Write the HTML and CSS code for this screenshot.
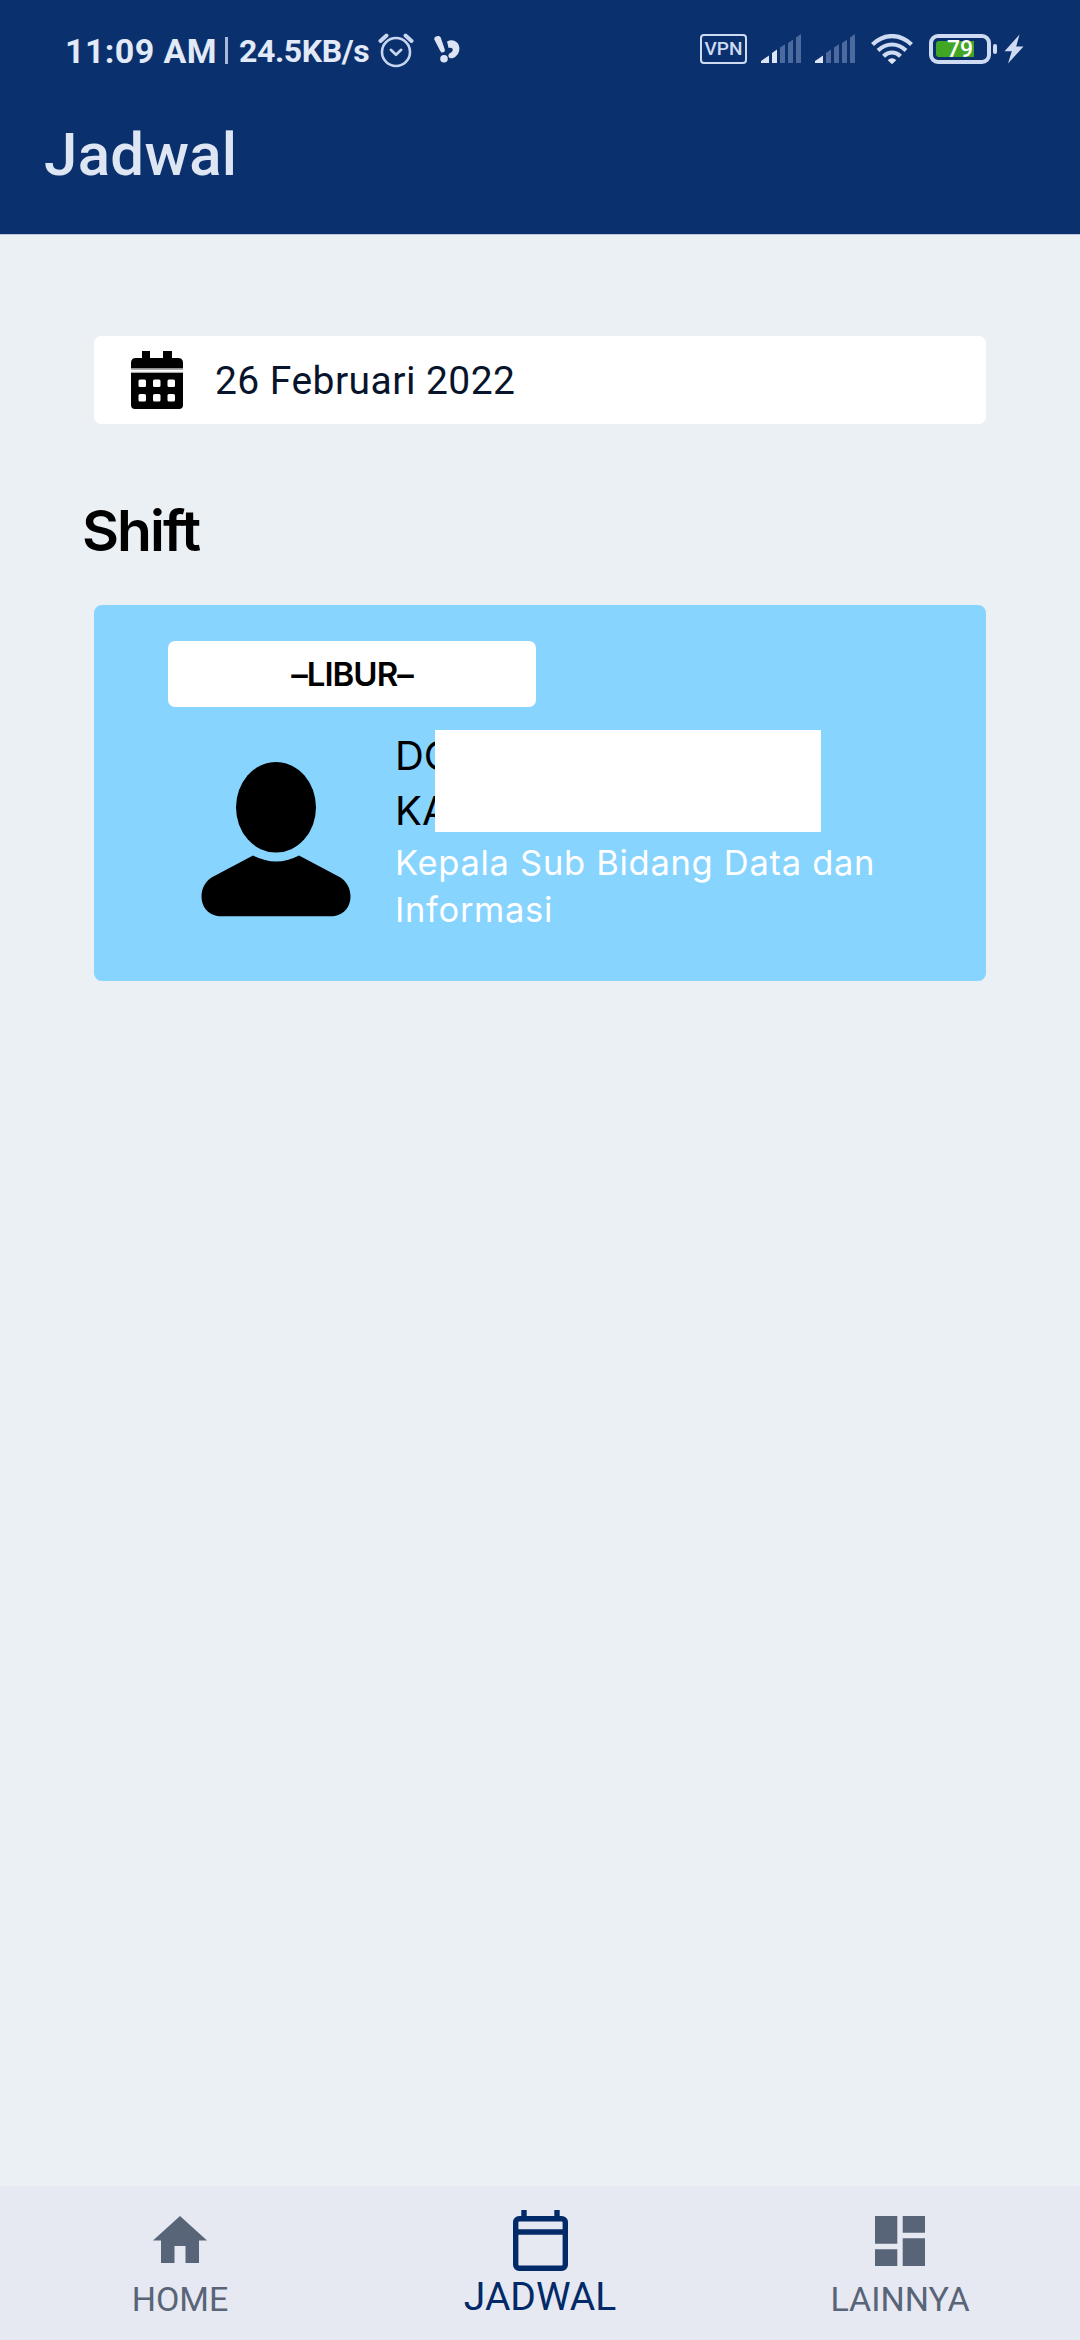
FILE: index.html
```html
<!DOCTYPE html>
<html lang="id">
<head>
<meta charset="utf-8">
<title>Jadwal</title>
<link rel="stylesheet" href="styles.css">
</head>
<body>
<div class="screen">
  <header class="header">
    <div class="status">
      <div class="status-left">
        <span class="time">11:09 AM</span>
        <span class="divider"></span>
        <span class="speed">24.5KB/s</span>
        <svg class="alarm" width="36" height="36" viewBox="0 0 36 36" fill="none" stroke="#c9d6f0" stroke-width="2.6" stroke-linecap="round" stroke-linejoin="round">
          <circle cx="18" cy="20" r="14"/>
          <path d="M12.8 17.8 18 22.8l5.200-5"/>
          <path d="M2.500 9 8.500 3.500M33.500 9l-6-5.500" stroke-width="4"/>
        </svg>
        <svg class="app" width="28" height="28" viewBox="0 0 28 28" fill="#dde5f5">
          <path d="M1.200 4.200C1 1.200 6.800-.3 7.800 2.800l4 11.800c.6 2.600-3 4-4.400 1.600z"/>
          <circle cx="11" cy="23.700" r="3.800"/>
          <path d="M14 6.500c6-3.500 12.800.5 12.400 7.500-.4 6-5 9.500-8.800 9.300-2.400-.3-3-3.700-.8-5 2.600-1.300 3.600-3.300 2.600-4.800-1-1.200-2.600-.9-3.800-.5z"/>
        </svg>
      </div>
      <div class="status-right">
        <span class="vpn">VPN</span>
        <svg class="sig1" width="40" height="30" viewBox="0 0 40 30" fill="#dde5f5">
          <path d="M0 29v-2l8-5.500V29zM11 29V19l5-3.500V29z"/>
          <path fill="#4c6a9d" d="M19 29V13.500l5-3.300V29zM27 29V9l5-3.300V29zM35 29V3.500L40 0v29z"/>
        </svg>
        <svg class="sig2" width="40" height="30" viewBox="0 0 40 30" fill="#dde5f5">
          <path d="M0 29v-2l8-5.500V29z"/>
          <path fill="#4c6a9d" d="M11 29V19l5-3.500V29zM19 29V13.500l5-3.300V29zM27 29V9l5-3.300V29zM35 29V3.500L40 0v29z"/>
        </svg>
        <svg class="wifi" width="42" height="30" viewBox="0 0 42 30" fill="none" stroke="#cfdbf3" stroke-width="4.200">
          <path d="M1.500 10.500C13-.8 29-.8 40.500 10.500"/>
          <path d="M7 16.500c8.500-8 19.500-8 28 0"/>
          <path d="M12.500 22.200c5.300-4.800 11.700-4.800 17 0"/>
          <path d="M16.800 26.300c2-2.700 6.400-2.700 8.400 0L21 30.200z" fill="#dde5f5" stroke="none"/>
        </svg>
        <span class="battery"><span class="level"></span><span class="percent">79</span></span>
        <span class="nub"></span>
        <svg class="bolt" width="20" height="30" viewBox="0 0 20 30" fill="#cfdbf3"><path d="M15.500.5.500 17.200h7.300L4 29.500 19.500 12.500h-7.300z"/></svg>
      </div>
    </div>
    <h1 class="title">Jadwal</h1>
  </header>

  <main class="content">
    <div class="date">
      <svg class="date-icon" width="52" height="58" viewBox="0 0 52 58">
        <path fill="#000" d="M11 0h8v7h13V0h9v7h6q5 0 5 5v5.500H0V12q0-5 5-5h6zM0 22h52v32q0 4-4 4H4q-4 0-4-4z"/>
        <path fill="#aaa" d="M0 17.500h52v1.500H0zM0 20.800h52V22H0z"/>
        <g fill="#fff">
          <rect x="7.500" y="28.500" width="7.500" height="7.500" rx="1.500"/><rect x="22" y="28.500" width="7.500" height="7.500" rx="1.500"/><rect x="36.500" y="28.500" width="7.500" height="7.500" rx="1.500"/>
          <rect x="7.500" y="43" width="7.500" height="7.500" rx="1.500"/><rect x="22" y="43" width="7.500" height="7.500" rx="1.500"/><rect x="36.500" y="43" width="7.500" height="7.500" rx="1.500"/>
        </g>
      </svg>
      <span class="date-text">26 Februari 2022</span>
    </div>

    <h2 class="section">Shift</h2>

    <section class="card">
      <div class="chip">–LIBUR–</div>
      <div class="person">
        <svg class="avatar" width="150" height="155" viewBox="0 0 150 155">
          <ellipse cx="75" cy="45.300" rx="40" ry="45.300"/>
          <path d="M52 93.500q23 12 46 0l41.500 22c15 9.500 13.500 36-7 38.700h-115c-20.500-2.700-22-29.200-7-38.700z"/>
        </svg>
        <div class="info">
          <div class="name">DO<br>KA<span class="mask"></span></div>
          <div class="role">Kepala Sub Bidang Data dan<br>Informasi</div>
        </div>
      </div>
    </section>
  </main>

  <nav class="nav">
    <a class="tab">
      <svg width="54" height="47" viewBox="0 0 54 47" fill="#586477"><path d="M27 0 54 24.500h-8V47H32.500V30h-11v17H8V24.500H0z"/></svg>
      <span class="label home">HOME</span>
    </a>
    <a class="tab active">
      <svg width="55" height="61" viewBox="0 0 55 61" fill="none" stroke="#022a68" stroke-width="5.400"><rect x="2.700" y="8.700" width="49.600" height="49.600" rx="3.500"/><path d="M3 22h49M11 0v8M44 0v8"/></svg>
      <span class="label schedule">JADWAL</span>
    </a>
    <a class="tab">
      <svg width="50" height="50" viewBox="0 0 50 50" fill="#586477"><path d="M0 0h22.300v27.800H0zM27.700 0H50v16.700H27.700zM0 33.300h22.300V50H0zM27.700 22.200H50V50H27.700z"/></svg>
      <span class="label more">LAINNYA</span>
    </a>
  </nav>
</div>
</body>
</html>
```
FILE: styles.css
```css
* { box-sizing: border-box; }

body {
  margin: 0;
  font-family: Roboto, "Liberation Sans", sans-serif;
}

svg { display: block; flex: none; }

.screen {
  display: flex;
  flex-direction: column;
  width: 1080px;
  height: 2340px;
  overflow: hidden;
  background: #ebf0f5;
}

.header {
  height: 235px;
  background: #0a316e;
  border-bottom: 1px solid #b9c6de;
}

.status {
  display: flex;
  justify-content: space-between;
  align-items: center;
  height: 98px;
  padding: 0 56px 0 65px;
}

.status-left, .status-right { display: flex; align-items: center; }

.time, .speed {
  padding-top: 3px;
  font-weight: 700;
  color: #e2e9f7;
  white-space: nowrap;
}
.time { width: 149px; font-size: 34px; letter-spacing: 0.4px; }
.divider { width: 3px; height: 27px; margin: 2px 11px 0; background: #a9b9d9; }
.speed { width: 131px; font-size: 32px; letter-spacing: -0.4px; }
.alarm { margin: 2px 0 0 8px; }
.app { margin-left: 19px; }

.vpn {
  width: 47px;
  height: 30px;
  border: 2.500px solid #cfdbf3;
  border-radius: 4px;
  font-size: 19px;
  font-weight: 500;
  line-height: 26px;
  text-align: center;
  color: #cfdbf3;
}
.sig1 { margin-left: 14px; }
.sig2 { margin-left: 14px; }
.wifi { margin-left: 16px; }

.battery {
  position: relative;
  width: 62px;
  height: 30px;
  margin-left: 16px;
  padding: 3px 2px;
  border: 4px solid #cfdbf3;
  border-radius: 9px;
}
.level { display: block; width: 38px; height: 16px; margin-left: 1px; border-radius: 3px 0 0 3px; background: #41a623; }
.percent {
  position: absolute;
  left: 14px;
  top: 0;
  font-size: 23px;
  font-weight: 500;
  line-height: 24px;
  color: #fff;
}
.nub { width: 4px; height: 10px; margin-left: 2px; border-radius: 2px; background: #cfdbf3; }
.bolt { margin-left: 7px; }

.title {
  margin: 0;
  padding-left: 44px;
  font-size: 60px;
  font-weight: 500;
  line-height: 114px;
  letter-spacing: 0.3px;
  color: #dfe6f3;
}

.content { flex: 1; padding: 101px 94px 0; }

.date {
  display: flex;
  align-items: center;
  height: 88px;
  padding-left: 37px;
  border-radius: 7px;
  background: #fff;
}
.date-text {
  margin-left: 32px;
  padding-top: 1px;
  font-size: 39px;
  letter-spacing: 0.45px;
  color: #07142b;
}

.section {
  margin: 77px 0 44px -12px;
  font-family: Inter, sans-serif;
  font-size: 57px;
  font-weight: 600;
  line-height: 60px;
  letter-spacing: -2px;
  color: #000;
}

.card {
  height: 376px;
  padding: 36px 74px 0;
  border-radius: 8px;
  background: #87d4ff;
  font-family: Inter, sans-serif;
}
.chip {
  width: 368px;
  height: 66px;
  border-radius: 7px;
  background: #fff;
  font-size: 33px;
  font-weight: 600;
  line-height: 66px;
  letter-spacing: -1px;
  text-align: center;
}
.person { display: flex; margin-top: 21px; padding-left: 33px; }
.avatar { margin-top: 34px; }
.info { margin-left: 44px; white-space: nowrap; }
.name { position: relative; font-size: 40px; font-weight: 400; line-height: 55px; }
.mask { position: absolute; left: 40px; top: 2px; width: 386px; height: 102px; background: #fff; }
.role { margin-top: 1px; font-size: 34.500px; line-height: 47px; letter-spacing: 0.7px; color: #fff; }

.nav {
  display: grid;
  grid-template-columns: repeat(3, 1fr);
  height: 154px;
  background: #e6e9f2;
}
.tab { display: flex; flex-direction: column; align-items: center; padding-top: 30px; color: #586477; }
.tab.active { padding-top: 24px; color: #022a68; }
.label { font-size: 34px; line-height: 40px; }
.home { margin-top: 16px; }
.schedule { margin-top: 6px; font-size: 39px; }
.more { margin-top: 13px; }
```
